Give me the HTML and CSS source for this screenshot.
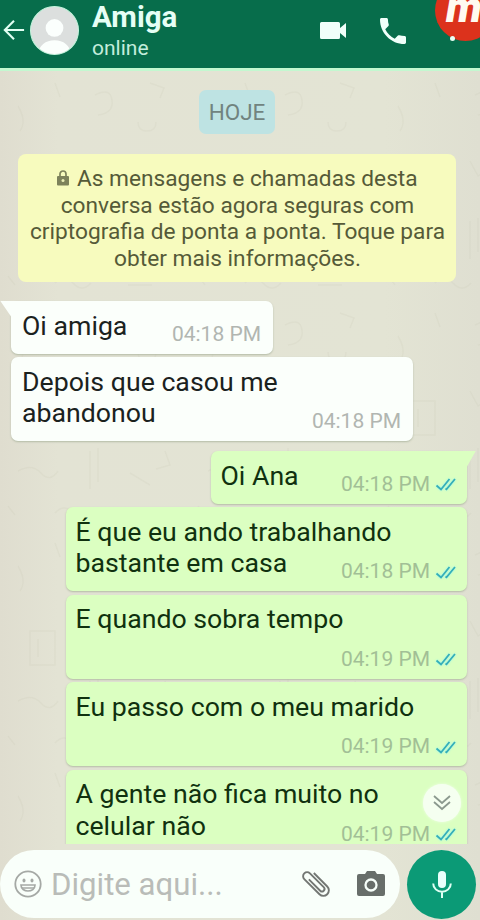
FILE: index.html
```
<!DOCTYPE html>
<html lang="pt-BR">
<head>
<meta charset="utf-8">
<title>Amiga</title>
<link rel="stylesheet" href="styles.css">
</head>
<body>
<svg class="defs" width="0" height="0" aria-hidden="true">
  <symbol id="ticks" viewBox="0 0 22 16"><path d="M1.500 9.500 6 13.500 14.500 3M10.500 12.500l1 .8L20 3" fill="none" stroke="#35aeb9" stroke-width="1.800"/></symbol>
</svg>
<div class="app">
  <header class="bar">
    <svg class="back" viewBox="0 0 24 24"><path d="M23 12H2M12 2 2 12l10 10" fill="none" stroke="#e2fff3" stroke-width="2.3"/></svg>
    <svg class="avatar" viewBox="0 0 48 48"><defs><clipPath id="face"><circle cx="24" cy="24" r="23"/></clipPath></defs><circle cx="24" cy="24" r="23.500" fill="#dcdfde" stroke="#c3f4dc"/><g clip-path="url(#face)" fill="#fbfffd"><circle cx="24" cy="21.500" r="8.700"/><path d="M8 48c0-9 7-14.500 16-14.500S40 39 40 48z"/></g></svg>
    <div class="who"><h1>Amiga</h1><p>online</p></div>
    <svg class="video" viewBox="0 0 26 18"><path d="M1.500 0h17Q20 0 20 1.500V6l6-5v15l-6-5v4.500q0 1.500-1.500 1.500h-17Q0 17 0 15.500v-14Q0 0 1.500 0z" fill="#f0fffa"/></svg>
    <svg class="phone" viewBox="3 3 18 18"><path d="M6.620 10.790c1.440 2.830 3.760 5.140 6.590 6.590l2.200-2.200c.27-.27.67-.36 1.020-.24 1.120.37 2.330.57 3.570.57.55 0 1 .45 1 1V20c0 .55-.45 1-1 1-9.390 0-17-7.610-17-17 0-.55.45-1 1-1h3.500c.55 0 1 .45 1 1 0 1.250.2 2.450.57 3.570.11.35.03.74-.25 1.020z" fill="#f0fffa"/></svg>
    <i class="dot"></i>
    <div class="recorder"><span>m</span></div>
  </header>
  <main class="chat">
    <svg class="doodles" width="480" height="852" aria-hidden="true">
      <defs><pattern id="paper" width="190" height="230" patternUnits="userSpaceOnUse"><g fill="none" stroke="#b9baa2" stroke-width="1.500" opacity=".13"><path d="M18 35q9 15 2 25M55 12l5 14M95 24q15-8 17 5t-14 15M138 51q0 9 9 9t9-9M150 12l14 5-4 10M30 100h25v34H30zM38 108v18M90 90l8 15 15-10M130 108c14-10 25 5 15 16s-21-2-15-16M18 170q14-8 23 2t17-2M90 150v38M98 147v34M130 172l20 12M165 150l5 14-14 4M55 212q9-10 18 0t18 0M128 214h24M8 205l7 9"/></g></pattern></defs>
      <rect width="480" height="852" fill="url(#paper)"/>
    </svg>
    <div class="day">HOJE</div>
    <div class="notice"><svg class="lock" viewBox="0 0 12 16"><path d="M3 7V4a3 3 0 0 1 6 0v3" fill="none" stroke="#7d825b" stroke-width="1.700"/><rect y="6" width="12" height="9.500" rx="1" fill="#7d825b"/><circle cx="6" cy="10.500" r="1.500" fill="#e9edb6"/></svg> As mensagens e chamadas desta<br>conversa estão agora seguras com<br>criptografia de ponta a ponta. Toque para<br>obter mais informações.</div>
    <section class="thread">
      <article class="msg in first short w-a"><p>Oi amiga</p><footer>04:18 PM</footer></article>
      <article class="msg in w-b"><p>Depois que casou me<br>abandonou</p><footer>04:18 PM</footer></article>
      <article class="msg out first short w-c"><p>Oi Ana</p><footer>04:18 PM<svg><use href="#ticks"/></svg></footer></article>
      <article class="msg out"><p>É que eu ando trabalhando<br>bastante em casa</p><footer>04:18 PM<svg><use href="#ticks"/></svg></footer></article>
      <article class="msg out"><p>E quando sobra tempo</p><footer>04:19 PM<svg><use href="#ticks"/></svg></footer></article>
      <article class="msg out"><p>Eu passo com o meu marido</p><footer>04:19 PM<svg><use href="#ticks"/></svg></footer></article>
      <article class="msg out"><p>A gente não fica muito no<br>celular não</p><footer>04:19 PM<svg><use href="#ticks"/></svg></footer></article>
    </section>
    <div class="down"><svg viewBox="0 0 18 16"><path d="m1 1 8 7 8-7M1 7l8 7 8-7" fill="none" stroke="#8b998e" stroke-width="1.800"/></svg></div>
  </main>
  <div class="compose">
    <div class="field">
      <svg class="smile" viewBox="0 0 28 28"><circle cx="14" cy="14" r="12.700" fill="none" stroke="#a5a9a5" stroke-width="1.800"/><ellipse cx="10" cy="10.500" rx="1.500" ry="2" fill="#a5a9a5"/><ellipse cx="18" cy="10.500" rx="1.500" ry="2" fill="#a5a9a5"/><path d="M7 15h14c0 8-14 8-14 0z" fill="none" stroke="#a5a9a5" stroke-width="1.700"/><path d="M8 18h12" stroke="#a5a9a5" stroke-width="1.500"/></svg>
      <span class="hint">Digite aqui...</span>
      <svg class="clip" viewBox="0 0 32 32"><path transform="rotate(-45 16 16)" d="M21.500 6v19a5.500 5.500 0 0 1-11 0V3.500a4 4 0 0 1 8 0V23a2.500 2.500 0 0 1-5 0V7" fill="none" stroke="#737773" stroke-width="1.900"/></svg>
      <svg class="camera" viewBox="0 0 28 25"><path d="M2 3h6l2-3h8l2 3h6q2 0 2 2v18q0 2-2 2H2q-2 0-2-2V5q0-2 2-2z" fill="#686e6a"/><circle cx="14" cy="14" r="5.500" fill="none" stroke="#f7fffa" stroke-width="2.300"/></svg>
    </div>
    <button class="mic" aria-label="Gravar"><svg viewBox="0 0 20 27"><rect x="6" width="8" height="17" rx="4" fill="#e9fffb"/><path d="M1.200 12.500a8.800 8.300 0 0 0 17.600 0M10 21v6" fill="none" stroke="#e0fff4" stroke-width="2"/></svg></button>
  </div>
</div>
</body>
</html>
```
FILE: styles.css
```
* { box-sizing: border-box; }
body { margin: 0; font-family: Roboto, sans-serif; }
h1, p { margin: 0; }
.defs { position: absolute; }
svg { display: block; flex: none; }
.app {
  width: 480px; height: 920px; overflow: hidden; position: relative;
  display: flex; flex-direction: column;
  background: linear-gradient(90deg, #dfddcf 0, #e3e3d4 12%, #e3e4d4 80%, #dfdfd1 100%);
}
.bar {
  height: 70.500px; flex: none; position: relative; overflow: hidden;
  display: flex; align-items: flex-start;
  background: #076d4b; border-bottom: 3px solid #c3f8d0;
}
.back { width: 22px; height: 22px; margin: 19px 0 0 3px; }
.avatar { width: 49px; height: 49px; margin: 6px 0 0 5px; }
.who { margin-left: 13px; width: 228px; color: #e6fff5; }
.who h1 { font-size: 29.500px; line-height: 35px; font-weight: 700; }
.who p { font-size: 21px; line-height: 26px; color: #c3eddc; }
.video { width: 26px; height: 18px; margin: 22px 0 0; }
.phone { width: 26px; height: 26px; margin: 18px 0 0 34px; }
.dot { position: relative; z-index: 1; width: 5px; height: 5px; border-radius: 50%; background: #e9fff5; margin: 36px 0 0 44px; }
.recorder {
  position: absolute; left: 435px; top: -20px; width: 61px; height: 61px;
  border-radius: 50%; background: #dc321c; color: #fffaf0;
}
.recorder span {
  position: absolute; left: 11px; top: 2px; font-size: 43px; line-height: 50px;
  font-weight: 900; font-style: italic;
}
.chat { height: 773px; flex: none; overflow: hidden; position: relative; }
.doodles { position: absolute; top: 0; left: 0; }
.day, .notice, .thread { position: relative; }
.day {
  width: 76px; height: 44px; margin: 19px 0 0 199px; border-radius: 7px;
  background: #bee3e3; color: #71837f; font-size: 22.500px; line-height: 45px; text-align: center;
}
.notice {
  width: 438px; height: 128px; margin: 20px 0 0 18px; padding: 12.500px 0 0 1px;
  border-radius: 8px; background: #f7fbbe; color: #555a38;
  text-align: center; font-size: 22.700px; line-height: 26.500px; white-space: nowrap;
}
.lock { display: inline-block; width: 12px; height: 16px; margin-right: 2px; }
.thread { display: flex; flex-direction: column; gap: 3.500px; margin-top: 19px; padding: 0 13px 0 11px; }
.msg {
  position: relative; height: 84px; border-radius: 7px; padding: 9.500px 11px 0;
  font-size: 26.700px; line-height: 31.500px; white-space: nowrap; color: #1b221e;
  box-shadow: 0 1px 2px #b3bba6;
}
.msg.short { height: 53px; padding-top: 10px; }
.in { background: #fbfffb; align-self: flex-start; }
.out { background: #dbffc1; align-self: flex-end; width: 401px; color: #10310f; padding-left: 9.500px; }
.w-a { width: 262px; }
.w-b { width: 402px; }
.w-c { width: 256px; margin-top: 6px; }
.first::before { content: ""; position: absolute; top: 0; width: 18px; height: 16px; }
.in.first::before { left: -11px; background: #fbfffb; clip-path: polygon(0 0, 100% 0, 100% 100%, 11px 100%); }
.out.first::before { right: -9px; background: #dbffc1; clip-path: polygon(0 0, 100% 0, 9px 100%, 0 100%); }
.msg footer {
  position: absolute; right: 12px; bottom: 7px; display: flex; align-items: center;
  font-size: 21px; line-height: 26px; color: #b1b6b1;
}
.out footer { right: 10px; color: #a2bf96; }
.msg footer svg { width: 22px; height: 16px; margin: 1px 0 0 5px; filter: drop-shadow(0 0 1px #8ff5f0); }
.down {
  position: absolute; left: 423px; top: 713px; width: 38px; height: 38px; border-radius: 50%;
  background: #f5fff0; display: grid; place-items: center; box-shadow: 0 0 3px #f0ffe8;
}
.down svg { width: 18px; height: 16px; }
.compose { display: flex; padding-top: 6px; }
.field {
  width: 400px; height: 68px; border-radius: 34px; background: #f9fffa;
  display: flex; align-items: center; padding-left: 14px;
}
.smile { width: 28px; height: 28px; }
.hint { margin-left: 9px; width: 250px; color: #b9bcb8; font-size: 31.200px; line-height: 36px; padding-top: 2px; white-space: nowrap; }
.clip { width: 32px; height: 32px; }
.camera { width: 28px; height: 25px; margin-left: 24px; }
.mic {
  width: 69px; height: 69px; margin-left: 7px; padding: 0; border: 0; border-radius: 50%;
  background: #0b9a76; display: grid; place-items: center;
}
.mic svg { width: 20px; height: 27px; }
```
